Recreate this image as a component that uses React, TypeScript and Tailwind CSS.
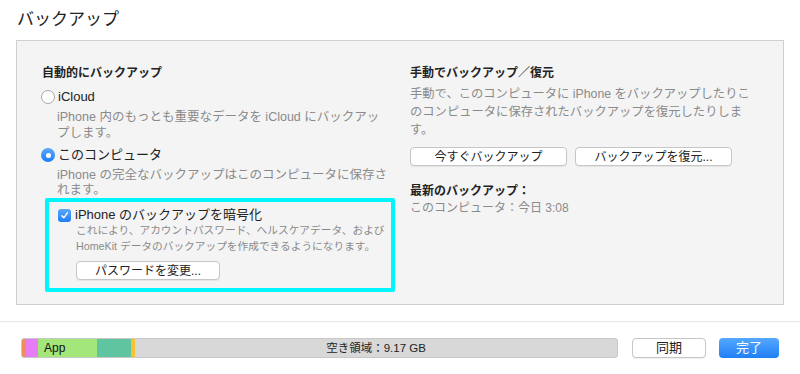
import React from "react";

const font = { fontFamily: '"Liberation Sans", "Noto Sans CJK JP", sans-serif' };

function Radio({ checked }: { checked?: boolean }) {
  if (checked)
    return (
      <span className="w-[14px] h-[14px] rounded-full bg-gradient-to-b from-[#5aa7ff] to-[#1a7df5] flex items-center justify-center shrink-0">
        <span className="w-[5px] h-[5px] rounded-full bg-white" />
      </span>
    );
  return <span className="w-[14px] h-[14px] rounded-full border border-[#a8a8a8] bg-white shrink-0" />;
}

function Btn({ children, className = "" }: { children: React.ReactNode; className?: string }) {
  return (
    <div
      className={
        "h-[19px] flex items-center justify-center bg-white border border-[#c6c6c6] rounded-[4px] text-[12px] text-[#222] shadow-[0_1px_0_rgba(0,0,0,0.06)] " +
        className
      }
    >
      {children}
    </div>
  );
}

export default function App() {
  return (
    <div className="w-[800px] h-[374px] bg-white relative overflow-hidden text-[#222]" style={font}>
      <div className="pl-[17px] pt-[8px] h-[40px] text-[17px] leading-[24px] text-[#222]">バックアップ</div>
      <div className="mx-[16px] h-[265px] border border-[#cfcfcf] bg-[#f4f4f4] flex">
        {/* Left column */}
        <div className="w-[376px] pl-[25px] pt-[24px] shrink-0">
          <div className="text-[12px] font-bold leading-[16px]">自動的にバックアップ</div>
          <div className="mt-[8px] flex items-center gap-[3px] -ml-[1px]">
            <Radio />
            <span className="text-[13px] leading-[16px]">iCloud</span>
          </div>
          <div className="pl-[15px] mt-[4px] text-[12.5px] leading-[16px] text-[#8a8a8a] whitespace-nowrap">
            <div>iPhone 内のもっとも重要なデータを iCloud にバックアッ</div>
            <div>プします。</div>
          </div>
          <div className="mt-[6px] flex items-center gap-[3px] -ml-[1px]">
            <Radio checked />
            <span className="text-[13px] leading-[16px]">このコンピュータ</span>
          </div>
          <div className="pl-[15px] mt-[5px] text-[12.5px] leading-[15px] text-[#8a8a8a] whitespace-nowrap">
            <div>iPhone の完全なバックアップはこのコンピュータに保存さ</div>
            <div>れます。</div>
          </div>
          <div className="ml-[3px] w-[350px] h-[94px] border-[4px] border-[#00f5ff] rounded-[2px] pl-[9px] pt-[5px]">
            <div className="flex items-center gap-[4px]">
              <span className="w-[13px] h-[13px] rounded-[3px] bg-gradient-to-b from-[#5aa7ff] to-[#1a7df5] flex items-center justify-center shrink-0">
                <svg width="9" height="9" viewBox="0 0 10 10">
                  <path d="M2 5.2 L4.2 7.6 L8.2 2" stroke="white" strokeWidth="1.6" fill="none" strokeLinecap="round" strokeLinejoin="round" />
                </svg>
              </span>
              <span className="text-[13px] leading-[16px]">iPhone のバックアップを暗号化</span>
            </div>
            <div className="pl-[18px] -mt-[1px] text-[10.7px] leading-[16px] text-[#8a8a8a] whitespace-nowrap">
              <div>これにより、アカウントパスワード、ヘルスケアデータ、および</div>
              <div>HomeKit データのバックアップを作成できるようになります。</div>
            </div>
            <div className="pl-[18px] mt-[7px]">
              <Btn className="w-[144px]">パスワードを変更...</Btn>
            </div>
          </div>
        </div>
        {/* Right column */}
        <div className="pl-[17px] pt-[24px] w-[360px]">
          <div className="text-[12px] font-bold leading-[16px]">手動でバックアップ／復元</div>
          <div className="mt-[4px] text-[12.3px] leading-[18px] text-[#8a8a8a] whitespace-nowrap">
            <div>手動で、このコンピュータに iPhone をバックアップしたりこ</div>
            <div>のコンピュータに保存されたバックアップを復元したりしま</div>
            <div>す。</div>
          </div>
          <div className="mt-[8px] flex gap-[8px]">
            <Btn className="w-[157px]">今すぐバックアップ</Btn>
            <Btn className="w-[157px]">バックアップを復元...</Btn>
          </div>
          <div className="mt-[17px] text-[12px] font-bold leading-[16px]">最新のバックアップ：</div>
          <div className="mt-[1px] text-[12px] leading-[16px] text-[#8a8a8a]">このコンピュータ：今日 3:08</div>
        </div>
      </div>
      <div className="mt-[16px] border-t border-[#e6e6e6]" />
      <div className="flex items-center pl-[21px] mt-[16px]">
        <div className="w-[597px] h-[20px] rounded-[3px] overflow-hidden flex border border-[#c8c8c8] bg-[#d8d8d8] text-[12px] leading-[18px]">
          <div className="w-[4px] bg-[#ef8e5c]" />
          <div className="w-[12px] bg-[#e77cf5]" />
          <div className="w-[59px] bg-[#a3e77b] pl-[6px] text-[#111]">App</div>
          <div className="w-[34px] bg-[#5fc5a0]" />
          <div className="w-[4px] bg-[#f8c232]" />
          <div className="flex-1 text-center text-[#222] text-[11.5px]">空き領域：9.17 GB</div>
        </div>
        <Btn className="ml-[14px] w-[74px] h-[20px] text-[13px]">同期</Btn>
        <div className="ml-[13px] w-[60px] h-[20px] rounded-[4px] bg-gradient-to-b from-[#55a8ff] to-[#1d7ff5] text-white text-[13px] flex items-center justify-center">
          完了
        </div>
      </div>
    </div>
  );
}
